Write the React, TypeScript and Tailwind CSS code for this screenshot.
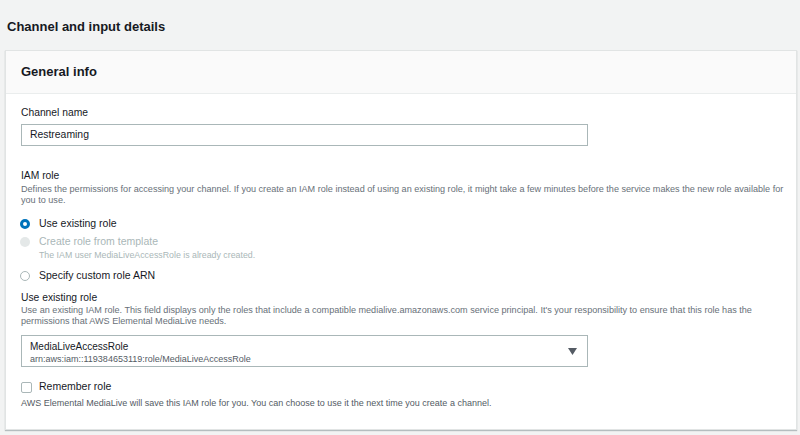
import React from "react";

const font = { fontFamily: '"Liberation Sans", Arial, sans-serif' };

const Radio = ({ state }: { state: "on" | "off" | "disabled" }) => {
  if (state === "on")
    return <span className="block w-[10px] h-[10px] rounded-full border-[3px] border-[#0073bb] bg-white" />;
  if (state === "disabled")
    return <span className="block w-[10px] h-[10px] rounded-full bg-[#e4e8e8]" />;
  return <span className="block w-[10px] h-[10px] rounded-full border border-[#aab7b8] bg-white" />;
};

export default function App() {
  return (
    <div className="w-[800px] h-[435px] bg-[#f2f3f3] overflow-hidden text-[#16191f]" style={font}>
      <div className="pt-[17px] pl-[7px] h-[37px]">
        <h1 className="text-[13px] leading-5 font-bold">Channel and input details</h1>
      </div>

      <div className="ml-[5px] mt-[13px] w-[792px] bg-white border border-[#e1e4e4] shadow-[0_1px_1px_rgba(0,28,36,0.25)]">
        <div className="h-[43px] flex items-center px-[15px] bg-[#fafafa] border-b border-[#eaeded]">
          <h2 className="text-[13px] font-bold">General info</h2>
        </div>

        <div className="px-[15px] pt-[12px] pb-[20px]">
          <div className="text-[10.3px] leading-[14px]">Channel name</div>
          <div className="mt-[4px] w-[567px] h-[22px] border border-[#aab7b8] flex items-center px-2 text-[10.4px]">
            Restreaming
          </div>

          <div className="mt-[23px] text-[10.3px] leading-[14px]">IAM role</div>
          <p className="mt-[1px] text-[9.1px] leading-[11px] text-[#687078] w-[768px]">
            Defines the permissions for accessing your channel. If you create an IAM role instead of using an existing role, it might take a few minutes before the service makes the new role available for you to use.
          </p>

          <div className="mt-[10px] h-4 flex items-center gap-[9px] -ml-px">
            <Radio state="on" />
            <span className="text-[10.5px]">Use existing role</span>
          </div>
          <div className="mt-[2px] h-4 flex items-center gap-[9px] -ml-px">
            <Radio state="disabled" />
            <span className="text-[10.5px] text-[#aab7b8]">Create role from template</span>
          </div>
          <div className="pl-[18px] text-[8.8px] leading-[11px] text-[#aab7b8]">
            The IAM user MediaLiveAccessRole is already created.
          </div>
          <div className="mt-[7px] h-4 flex items-center gap-[9px] -ml-px">
            <Radio state="off" />
            <span className="text-[10.5px]">Specify custom role ARN</span>
          </div>

          <div className="mt-[7px] text-[10.3px] leading-[14px]">Use existing role</div>
          <p className="text-[9.1px] leading-[11px] text-[#687078] w-[768px]">
            Use an existing IAM role. This field displays only the roles that include a compatible medialive.amazonaws.com service principal. It's your responsibility to ensure that this role has the permissions that AWS Elemental MediaLive needs.
          </p>

          <div className="mt-[8px] w-[567px] h-[32px] border border-[#aab7b8] flex items-center justify-between pl-2 pr-[10px]">
            <div className="pt-[3px]">
              <div className="text-[10px] leading-[13px]">MediaLiveAccessRole</div>
              <div className="text-[9px] leading-[12px] text-[#545b64]">arn:aws:iam::119384653119:role/MediaLiveAccessRole</div>
            </div>
            <svg width="9" height="7" viewBox="0 0 9 7">
              <path d="M0 0h9L4.5 7z" fill="#545b64" />
            </svg>
          </div>

          <div className="mt-[12px] h-4 flex items-center gap-[7px]">
            <span className="block w-[11px] h-[11px] border border-[#aab7b8] rounded-[2px] bg-white" />
            <span className="text-[10.5px]">Remember role</span>
          </div>
          <p className="mt-[3px] text-[9px] leading-[11px] text-[#545b64]">
            AWS Elemental MediaLive will save this IAM role for you. You can choose to use it the next time you create a channel.
          </p>
        </div>
      </div>
    </div>
  );
}
